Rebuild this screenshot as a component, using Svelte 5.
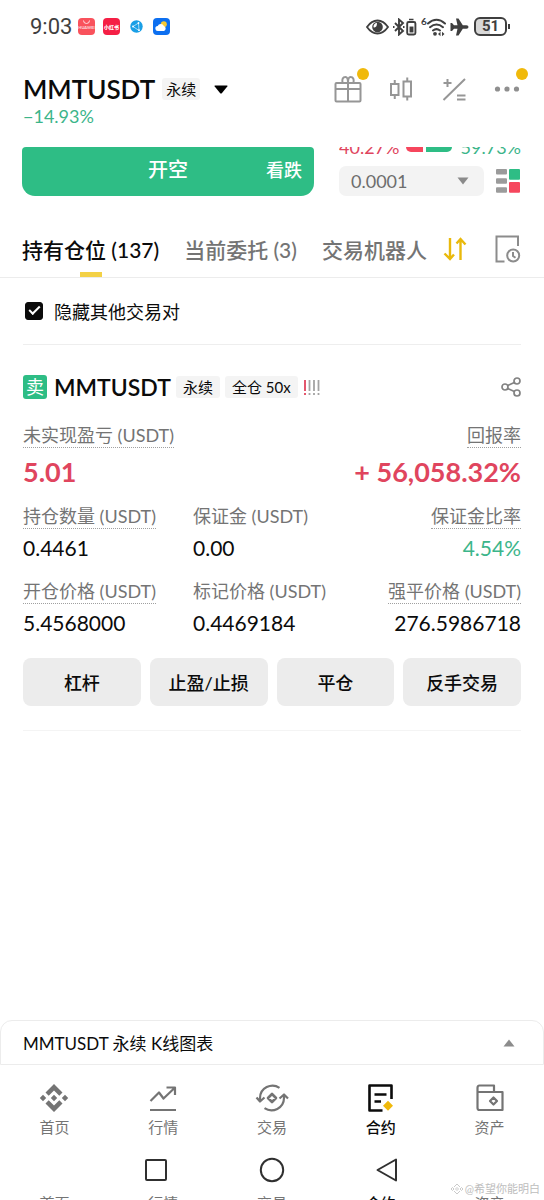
<script>
  const tabs = [
    { label: '持有仓位 (137)', active: true },
    { label: '当前委托 (3)', active: false },
    { label: '交易机器人', active: false }
  ];
  const stats = [
    { label: '持仓数量 (USDT)', value: '0.4461', dotted: true },
    { label: '保证金 (USDT)', value: '0.00', dotted: false },
    { label: '保证金比率', value: '4.54%', dotted: true, green: true },
    { label: '开仓价格 (USDT)', value: '5.4568000', dotted: true },
    { label: '标记价格 (USDT)', value: '0.4469184', dotted: false },
    { label: '强平价格 (USDT)', value: '276.5986718', dotted: true }
  ];
  const actions = ['杠杆', '止盈/止损', '平仓', '反手交易'];
  const nav = ['首页', '行情', '交易', '合约', '资产'];
  let hideOthers = $state(true);
</script>

<div class="page">
  <div class="status">
    <div class="group">
      <span class="time">9:03</span>
      <svg width="17" height="17" viewBox="0 0 17 17"><rect width="17" height="17" rx="4" fill="#f9525c" /><path d="M5.500 2.500a3 3 0 0 0 6 0" fill="none" stroke="#fff" opacity=".8" /><text x="8.500" y="11" font-size="4" font-weight="700" fill="#fff" text-anchor="middle" opacity=".8">HUAWEI</text></svg>
      <svg width="17" height="17" viewBox="0 0 17 17"><rect width="17" height="17" rx="4" fill="#f51f45" /><text x="8.500" y="11" font-size="5" font-weight="900" fill="#fff" text-anchor="middle">小红书</text></svg>
      <svg width="17" height="17" viewBox="0 0 17 17"><circle cx="8.500" cy="8.500" r="6.200" fill="#1a9fe6" /><g fill="none" stroke="#fff" stroke-width=".6"><path d="M5 8.500 10.500 5M5 8.500l6 4M10.500 5l.5 7.500" /></g><g fill="#fff"><circle cx="5" cy="8.500" r=".9" /><circle cx="10.500" cy="5" r=".9" /><circle cx="11" cy="12.200" r=".9" /></g></svg>
      <svg width="17" height="17" viewBox="0 0 17 17"><rect width="17" height="17" rx="4" fill="#0d6ff0" /><circle cx="10.800" cy="6.300" r="3" fill="#f7c934" /><path d="M5 13a2.500 2.500 0 0 1-.3-5 3.300 3.300 0 0 1 6.200.1A2.600 2.600 0 0 1 11 13z" fill="#fff" /></svg>
    </div>
    <div class="group right">
      <svg width="23" height="18" viewBox="0 0 23 18"><path d="M1 9q4.500-6.500 10.500-6.500T22 9q-4.500 6.500-10.500 6.500T1 9z" fill="none" stroke="#3f3f3f" stroke-width="1.800" /><circle cx="11.500" cy="9" r="5.300" fill="#3f3f3f" /><path d="M11 4.800a4 4 0 0 0-3.500 4.500q3.500 1 3.500-4.500z" fill="#fff" /></svg>
      <svg width="24" height="18" viewBox="0 0 24 18" fill="none" stroke="#3f3f3f" stroke-width="1.900"><path d="m2 5 8 8-4 3.500v-15L10 5l-8 8" /><path d="M0 9h1.500M10 9h1.500" /><rect x="14.200" y="4" width="8.200" height="12.500" rx="1.500" /><path d="M16 1.500h4.500" stroke-width="1.500" /><rect x="17.500" y="9.500" width="2" height="4" fill="#3f3f3f" /></svg>
      <svg width="25" height="20" viewBox="0 0 25 20"><text x="0" y="8" font-size="10" font-weight="700" fill="#3f3f3f">6</text><g fill="none" stroke="#3f3f3f" stroke-width="2" stroke-linecap="round"><path d="M7 6.500q8.500-7.500 17 0M9 10.200q6.500-5.500 13 0M12 13.500q3.500-2.800 7 0" /></g><circle cx="14" cy="16.800" r="1.900" fill="#3f3f3f" /><path d="m17 17 2.500-2.300v4.600zM23.500 17 21 14.700v4.600z" fill="#3f3f3f" /></svg>
      <svg width="19" height="18" viewBox="0 0 19 18"><path d="M18.500 9q0-1.800-2-1.800h-3.700L8.500.5H6l1.500 6.700H4L2 5H.5v8H2l2-2.200h3.500L6 17.500h2.500l4.300-6.700h3.700q2 0 2-1.800z" fill="#3f3f3f" /></svg>
      <span class="battery">51</span>
    </div>
  </div>

  <header>
    <div class="pair">
      <div class="line">
        <h1>MMTUSDT</h1><span class="tag">永续</span>
        <svg class="drop" width="14" height="9" viewBox="0 0 14 9"><path d="M1 .5h12q.8.200.3 1L7.800 8.200q-.8.800-1.600 0L.700 1.500Q.200.700 1 .5z" /></svg>
      </div>
      <div class="pct">−14.93%</div>
    </div>
    <div class="tools">
      <button aria-label="礼物"><svg width="28" height="28" viewBox="0 0 28 28" fill="none" stroke="#969696" stroke-width="2"><rect x="1.500" y="8" width="25" height="18.500" rx="1" /><path d="M1.500 14h25M14 8v18.500M14 8H8.500q-1-6 3-6 2.500 0 2.500 6zM14 8h5.500q1-6-3-6Q14 2 14 8z" /></svg><i class="dot"></i></button>
      <button aria-label="K线"><svg width="28" height="28" viewBox="0 0 28 28" fill="none" stroke="#969696" stroke-width="2"><rect x="4" y="9" width="7.500" height="11" /><rect x="16.500" y="6.500" width="7.500" height="15" /><path d="M7.750 5v4M7.750 20v4M20.250 2.500v4M20.250 21.500v4" /></svg></button>
      <button aria-label="计算器"><svg width="28" height="28" viewBox="0 0 28 28" fill="none" stroke="#969696" stroke-width="2"><path d="M3.500 25 25 4M3.500 8h8M7.500 4v8M17 20.500h8.500M17 24.500h8.500" /></svg></button>
      <button aria-label="更多"><svg width="28" height="28" viewBox="0 0 28 28" fill="#8f8f8f"><circle cx="4.500" cy="14" r="2.600" /><circle cx="14" cy="14" r="2.600" /><circle cx="23.500" cy="14" r="2.600" /></svg><i class="dot"></i></button>
    </div>
  </header>

  <section class="order">
    <button class="short"><span></span><b>开空</b><span class="hint">看跌</span></button>
    <div class="book">
      <div class="ratio"><span class="red">40.27%</span><i class="bar sell"></i><i class="bar buy"></i><span class="green">59.73%</span></div>
      <div class="prec">
        <div class="select">
          <select aria-label="价格精度"><option>0.0001</option></select>
          <svg width="12" height="8" viewBox="0 0 12 8"><path d="M.5.500h11L6 7.500z" fill="#8a8a8a" /></svg>
        </div>
        <svg width="25" height="24" viewBox="0 0 25 24"><g fill="#9b9b9b"><rect x="0" y="0" width="11" height="5.500" rx="1" /><rect x="0" y="9.200" width="11" height="5.500" rx="1" /><rect x="0" y="18.300" width="11" height="5.500" rx="1" /></g><rect x="13" y="0" width="11" height="10.800" rx="1" fill="#2ebd85" /><rect x="13" y="13" width="11" height="10.800" rx="1" fill="#f6465d" /></svg>
      </div>
    </div>
  </section>

  <nav class="tabs">
    {#each tabs as t}<button class:active={t.active}>{t.label}</button>{/each}
    <svg class="sort" width="24" height="24" viewBox="0 0 24 24" fill="none" stroke="#e9b90c" stroke-width="2.400"><path d="M7 1v21M1.500 16.500 7 22l4-4.500M17.500 23V2M22.500 7.500l-5-5.500-4 4.500" /></svg>
    <svg class="history" width="26" height="28" viewBox="0 0 26 28" fill="none" stroke="#8c8c8c" stroke-width="2"><path d="M9.500 26.500H1.500v-25h21.500V11" /><circle cx="18.200" cy="20.500" r="6" /><path d="M18 17v4l2.500 1.800" /></svg>
  </nav>

  <main>
    <label class="hide"><input type="checkbox" bind:checked={hideOthers} />隐藏其他交易对</label>

    <article>
      <div class="title">
        <span class="side">卖</span><h2>MMTUSDT</h2><span class="tag">永续</span><span class="tag">全仓 50x</span>
        <svg width="18" height="17" viewBox="0 0 18 17" stroke-width="1.800"><path d="M2 1v11M2 14v2" stroke="#e0455e" /><path d="M6.500 1v11M6.500 14v2M11 1v11M11 14v2M15.500 1v11M15.500 14v2" stroke="#a3a3a3" /></svg>
        <button class="share" aria-label="分享"><svg width="20" height="20" viewBox="0 0 20 20" fill="none" stroke="#828282" stroke-width="1.700"><circle cx="4" cy="10" r="3" /><circle cx="16" cy="4" r="3" /><circle cx="16" cy="16" r="3" /><path d="m6.700 8.600 6.600-3.200M6.700 11.400l6.600 3.200" /></svg></button>
      </div>
      <div class="pnl">
        <div><span class="label dotted">未实现盈亏 (USDT)</span><strong>5.01</strong></div>
        <div class="end"><span class="label dotted">回报率</span><strong>+ 56,058.32%</strong></div>
      </div>
      <div class="stats">
        {#each stats as s, i}
          <div class:end={i % 3 === 2}>
            <span class="label" class:dotted={s.dotted}>{s.label}</span>
            <span class="value" class:green={s.green}>{s.value}</span>
          </div>
        {/each}
      </div>
      <div class="actions">
        {#each actions as a}<button>{a}</button>{/each}
      </div>
    </article>
  </main>

  <button class="chart">MMTUSDT 永续 K线图表<svg width="12" height="8" viewBox="0 0 12 8"><path d="M6 .5 11.500 7.500H.5z" fill="#8c8c8c" /></svg></button>

  <nav class="bottom">
    {#each nav as n, i}
      <a href="#{n}" class:current={i === 3}>
        <svg width="34" height="30" viewBox="0 0 34 30" fill="none" stroke="currentColor" stroke-width="2.200" stroke-linejoin="round">
          {#if i === 0}
            <g fill="currentColor" stroke="none"><path d="m17 1 8.500 8.500-3.200 3.200L17 7.400l-5.300 5.300-3.200-3.200zM17 29l8.500-8.500-3.200-3.200-5.300 5.300-5.300-5.300-3.200 3.200z" /><path d="m17 11.800 3.200 3.200-3.200 3.200-3.200-3.200zM6 11.800 9.200 15 6 18.200 2.800 15zM28 11.800l3.200 3.200-3.200 3.200-3.200-3.200z" /></g>
          {:else if i === 1}
            <path d="m4.500 18 8.500-8.500 4.500 6L28 5.500M20.500 4.500H29V12M4 27h26" />
          {:else if i === 2}
            <path d="M24.500 4.800A12.500 12.500 0 0 0 5 15v3M1.500 14.500 5 18.500l4.500-4M9.500 25.200A12.500 12.500 0 0 0 29 15v-4M24.500 15.500l4.500-4 4 4" /><path d="m17 11 4 4-4 4-4-4z" stroke-width="2.600" />
          {:else if i === 3}
            <path d="M18.500 27.500H5.500v-25h22v13.500M10.500 11.500H22.500M10.500 18.500h6.500" stroke-width="2.600" /><path d="m24 17.700 5 5-5 5-5-5z" fill="#f0b90b" stroke="none" />
          {:else}
            <path d="M4.500 9V25q0 2 2 2H29.500V9H4.500V5q0-2.500 2-2.500H21V9M20.500 14.500l3.500 3.500-3.500 3.500L17 18z" />
          {/if}
        </svg>
        <span>{n}</span>
      </a>
    {/each}
  </nav>

  <div class="system">
    <span></span>
    <svg width="24" height="24" viewBox="0 0 24 24"><rect x="2" y="2" width="20" height="20" rx="1" /></svg>
    <svg width="26" height="26" viewBox="0 0 26 26"><circle cx="13" cy="13" r="11.200" /></svg>
    <svg class="back" width="24" height="26" viewBox="0 0 24 26"><path d="M21 2.500v21L2.500 13z" stroke-linejoin="round" /></svg>
    <span></span>
  </div>
  <div class="under" aria-hidden="true">
    {#each nav as n, i}<span class:current={i === 3}>{n}</span>{/each}
  </div>

  <div class="mark">
    <svg width="12" height="12" viewBox="0 0 12 12" fill="none" stroke="#bdbdbd"><path d="m3 4 3-3 3 3M3 8l3 3 3-3M6 4.500 7.500 6 6 7.500 4.500 6zM0 6l1.500-1.500L3 6 1.500 7.500zM9 6l1.500-1.500L12 6l-1.500 1.500z" stroke-width=".8" /></svg>@希望你能明白
  </div>
</div>

<style>
  :global(body) { margin: 0; background: #fff; }
  .page { position: relative; display: flex; flex-direction: column; min-height: 100vh; box-sizing: border-box; overflow: hidden; font-family: Lato, "Noto Sans CJK SC", sans-serif; color: #0b0b0b; background: #fff; }
  button { border: 0; padding: 0; background: none; font: inherit; color: inherit; }
  svg { display: block; flex: none; }
  h1, h2 { margin: 0; font-weight: 600; }
  .red { color: #e0455e; }
  .green { color: #3cb58a; }

  .status { display: flex; justify-content: space-between; align-items: center; height: 53px; padding: 0 37px 0 30px; }
  .group { display: flex; align-items: center; gap: 8px; }
  .right { gap: 4px; }
  .time { font: 400 22px/28px Roboto, sans-serif; color: #3f3f3f; margin-right: -2px; }
  .battery { position: relative; width: 29px; border: 2px solid #3f3f3f; border-radius: 6px; background: linear-gradient(90deg, #d8d8d8 50%, #fff 50%); color: #3f3f3f; font: 700 15px/15px Roboto, sans-serif; text-align: center; margin-left: 1px; }
  .battery::after { content: ""; position: absolute; right: -5px; top: 5px; width: 2px; height: 5px; background: #3f3f3f; }

  header { display: flex; justify-content: space-between; height: 94px; padding: 0 23px; box-sizing: border-box; }
  .line, .title { display: flex; align-items: center; }
  .pair { padding-top: 20px; }
  .line { height: 32px; }
  h1 { font-size: 26px; line-height: 32px; }
  .tag { background: #f4f4f4; border-radius: 3px; padding: 0 4px; font-size: 15px; line-height: 22px; }
  .line .tag { margin-left: 7px; }
  .drop { margin-left: 14px; }
  .pct { font-size: 18px; line-height: 22px; color: #3cb58a; }
  .tools { display: flex; gap: 25px; padding-top: 22px; align-items: flex-start; }
  .tools button { position: relative; }
  .dot { position: absolute; top: -7px; right: -7px; width: 12px; height: 12px; border-radius: 50%; background: #f0b90b; }

  .order { display: grid; grid-template-columns: 292fr 182fr; gap: 25px; padding: 0 23px 0 22px; height: 49px; overflow: hidden; }
  .short { display: grid; grid-template-columns: 1fr auto 1fr; align-items: center; padding: 0 12px 6px; background: #2ebd85; color: #fff; border-radius: 4px 4px 13px 13px; }
  .short b { font-size: 20px; font-weight: 500; }
  .hint { text-align: right; font-size: 18px; font-weight: 500; }
  .book { display: flex; flex-direction: column; justify-content: space-between; }
  .ratio { display: flex; align-items: flex-end; height: 10px; overflow: hidden; font-size: 18px; line-height: 20px; }
  .bar { height: 5px; margin-bottom: 5px; }
  .sell { width: 17px; margin-left: 7px; background: #f6465d; border-radius: 0 0 0 5px; }
  .buy { width: 26px; margin: 0 auto 5px 3px; background: #2ebd85; border-radius: 0 0 5px 0; }
  .prec { display: flex; align-items: center; gap: 12px; }
  .select { position: relative; flex: 1; }
  select { appearance: none; display: block; width: 100%; height: 30px; border: 0; border-radius: 7px; background: #f3f3f3; padding: 0 12px; font: 18px Lato, sans-serif; color: #6d6d6d; }
  .select svg { position: absolute; right: 15px; top: 11px; }

  .tabs { display: flex; align-items: center; height: 81px; padding: 0 23px 0 22px; border-bottom: 1px solid #ececec; }
  .tabs button { position: relative; height: 100%; padding-top: 24px; box-sizing: border-box; margin-right: 25px; font-size: 21px; font-weight: 500; color: #747474; white-space: nowrap; }
  .tabs .active { color: #0b0b0b; }
  .active::after { content: ""; position: absolute; left: 50%; bottom: 0; width: 22px; height: 5px; margin-left: -11px; background: #f3d146; }
  .tabs svg { margin-top: 24px; }
  .tabs .sort { margin-left: -9px; }
  .tabs .history { margin-left: auto; }

  main { flex: 1; padding: 0 23px; }
  .hide { display: flex; align-items: center; height: 66px; border-bottom: 1px solid #eee; font-size: 18px; gap: 11px; padding-left: 2px; }
  input { appearance: none; width: 18px; height: 18px; margin: 0; border-radius: 3px; border: 1px solid #0b0b0b; display: grid; place-items: center; }
  input:checked { background: #0b0b0b; }
  input:checked::after { content: ""; width: 9px; height: 4px; border-left: 2px solid #fff; border-bottom: 2px solid #fff; transform: translateY(-2px) rotate(-45deg); }
  article { padding: 25px 0 24px; border-bottom: 1px solid #f4f4f4; }
  .title { height: 34px; gap: 5px; }
  .side { width: 24px; margin-right: 2px; border-radius: 3px; background: #2ebd85; color: #fff; font-size: 18px; line-height: 24px; text-align: center; }
  h2 { font-size: 23px; line-height: 30px; }
  .title .tag { padding: 0 7px; }
  .share { margin-left: auto; }
  .pnl { display: flex; justify-content: space-between; padding-top: 19px; }
  .pnl div, .stats div { display: flex; flex-direction: column; align-items: flex-start; }
  .pnl .end, .stats .end { align-items: flex-end; }
  .label { height: 24px; line-height: 24px; font-size: 18px; color: #747474; border-bottom: 1px solid transparent; white-space: nowrap; }
  .dotted { border-bottom: 1px dotted #a0a0a0; }
  strong { font-size: 27px; line-height: 32px; margin-top: 8px; color: #e0455e; }
  .stats { display: grid; grid-template-columns: 170fr 164fr 164fr; row-gap: 19px; padding-top: 16px; }
  .value { margin-top: 7px; font-size: 21px; line-height: 24px; }
  .actions { display: grid; grid-template-columns: repeat(4, 1fr); gap: 9px; padding-top: 23px; }
  .actions button { height: 48px; border-radius: 8px; background: #ececec; font-size: 18px; font-weight: 500; }

  .chart { display: flex; justify-content: space-between; align-items: center; height: 45px; padding: 0 28px 0 22px; border: 1px solid #ececec; border-radius: 12px 12px 0 0; font-size: 17px; }
  .bottom, .under, .system { display: grid; grid-template-columns: repeat(5, 1fr); justify-items: center; }
  .bottom { height: 80px; }
  .bottom a { display: flex; flex-direction: column; align-items: center; padding-top: 18px; color: #747474; text-decoration: none; font-size: 15px; line-height: 20px; gap: 4px; }
  .bottom .current, .under .current { color: #0b0b0b; font-weight: 500; }
  .system { height: 49px; align-items: center; }
  .system svg { fill: none; stroke: #303030; stroke-width: 2; }
  .system .back { margin-left: 12px; }
  .system svg:first-of-type { margin-right: 14px; }
  .under { height: 6px; overflow: hidden; font-size: 15px; line-height: 20px; color: #747474; }
  .under span { margin-top: -1px; }
  .mark { position: absolute; right: 4px; bottom: 2px; display: flex; align-items: center; gap: 2px; font-size: 11px; line-height: 18px; color: #bdbdbd; }
</style>
